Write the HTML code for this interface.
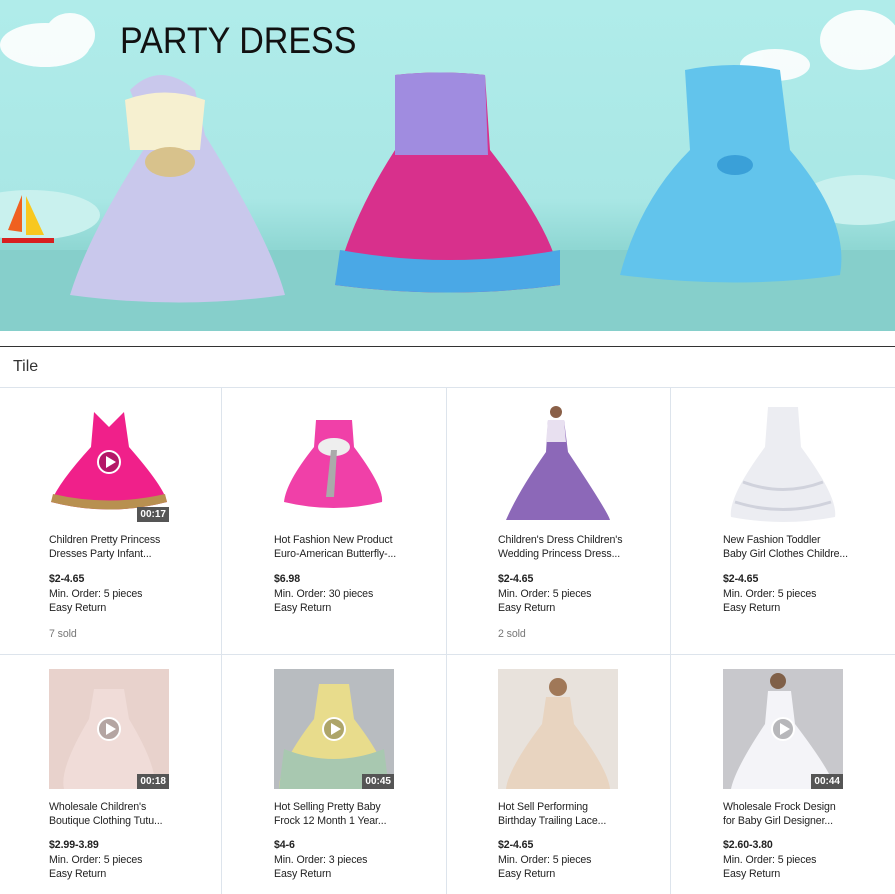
<!DOCTYPE html>
<html><head><meta charset="utf-8"><style>
*{margin:0;padding:0;box-sizing:border-box}
body{width:895px;height:891px;overflow:hidden;background:#fff;font-family:"Liberation Sans",Arial,sans-serif;position:relative}
.banner{position:absolute;left:0;top:0;width:895px;height:331px;background:linear-gradient(#b0ecea 0%,#a9e7e5 60%,#8fd7d3 75%,#85d0cc 100%);overflow:hidden}
.title{position:absolute;left:120px;top:20px;font-size:37px;letter-spacing:0;color:#111;font-family:"Liberation Sans",sans-serif;transform:scaleX(0.92);transform-origin:left top;white-space:nowrap}
.hr{position:absolute;left:0;top:346px;width:895px;height:1px;background:#333}
.tile{position:absolute;left:13px;top:358px;font-size:16px;color:#333}
.grid{position:absolute;left:0;top:387px;width:895px;border-top:1px solid #dde4ec}
.cell{position:absolute;border-right:1px solid #dde4ec;border-bottom:1px solid #dde4ec}
.img{position:absolute;left:49px;width:120px;height:120px}
.dur{position:absolute;right:0;bottom:0;background:#555;color:#fff;font-size:10px;font-weight:bold;padding:2px 3px}
.play{position:absolute;left:48px;top:48px;width:24px;height:24px;border:2px solid #fff;border-radius:50%;background:rgba(0,0,0,.25)}
.play:after{content:"";position:absolute;left:7px;top:4px;border-left:10px solid #fff;border-top:6px solid transparent;border-bottom:6px solid transparent}
.t,.p,.s{white-space:nowrap;font-size:10.6px;letter-spacing:-0.1px}
.t{position:absolute;left:49px;line-height:13.5px;color:#222}
.p{position:absolute;left:49px;line-height:14.5px;color:#222}
.s{position:absolute;left:49px;color:#777}
</style></head><body>
<div class="banner">
<svg width="895" height="331" style="position:absolute;left:0;top:0">
<g fill="#fff" opacity=".9"><ellipse cx="45" cy="45" rx="45" ry="22"/><ellipse cx="70" cy="35" rx="25" ry="22"/><ellipse cx="775" cy="65" rx="35" ry="16"/><ellipse cx="860" cy="40" rx="40" ry="30"/></g>
<g fill="#c9f1ee"><ellipse cx="30" cy="215" rx="70" ry="25"/><ellipse cx="860" cy="200" rx="60" ry="25"/></g>
<rect x="0" y="250" width="895" height="81" fill="#86cfcb"/>
<polygon points="8,230 22,195 22,232" fill="#f06020"/><polygon points="26,196 44,235 26,235" fill="#f8c820"/><rect x="2" y="238" width="52" height="5" fill="#d82020"/>
<path d="M130 90 Q160 60 195 90 L205 135 Q270 240 285 295 Q180 310 70 295 Q90 230 150 140Z" fill="#c9c8ec"/>
<path d="M125 100 Q165 85 205 100 L200 150 L130 150Z" fill="#f6f0d0"/>
<ellipse cx="170" cy="162" rx="25" ry="15" fill="#d8c28c"/>
<path d="M395 75 Q440 70 485 75 L490 150 Q560 240 560 285 Q450 300 335 285 Q350 220 395 150Z" fill="#d8308c"/>
<path d="M395 75 Q440 70 485 75 L488 155 L395 155Z" fill="#a08ce0"/>
<path d="M340 250 Q450 270 560 250 L560 285 Q450 300 335 285Z" fill="#4aa8e6"/>
<path d="M685 70 Q735 60 780 70 L790 150 Q850 220 840 275 Q740 290 620 275 Q640 200 690 150Z" fill="#62c4ec"/>
<ellipse cx="735" cy="165" rx="18" ry="10" fill="#3aa0d8"/>
</svg>
<div class="title">PARTY DRESS</div>
</div>
<div class="hr"></div>
<div class="tile">Tile</div>
<div class="grid">
<div class="cell" style="left:0;top:0;width:222px;height:267px">
<div class="img" style="top:14px"><svg width="120" height="120"><path d="M45 10 L60 25 L75 10 L80 45 Q115 85 118 100 Q60 115 2 100 Q10 80 42 45Z" fill="#f0208a"/><path d="M2 100 Q60 115 118 100 L116 92 Q60 105 4 92Z" fill="#b89050"/></svg><div class="play"></div><div class="dur">00:17</div></div>
<div class="t" style="top:146px">Children Pretty Princess<br>Dresses Party Infant...</div>
<div class="p" style="top:184px"><b>$2-4.65</b><br>Min. Order: 5 pieces<br>Easy Return</div>
<div class="s" style="top:240px">7 sold</div></div>
<div class="cell" style="left:221px;top:0;width:226px;height:267px">
<div class="img" style="left:53px;top:14px"><svg width="120" height="120"><path d="M42 18 L78 18 L80 45 Q110 85 108 100 Q60 112 10 100 Q12 80 40 45Z" fill="#f040a8"/><ellipse cx="60" cy="45" rx="16" ry="9" fill="#eee"/><path d="M57 48 L52 95 L60 95 L63 48Z" fill="#aaa"/></svg></div>
<div class="t" style="left:53px;top:146px">Hot Fashion New Product<br>Euro-American Butterfly-...</div>
<div class="p" style="left:53px;top:184px"><b>$6.98</b><br>Min. Order: 30 pieces<br>Easy Return</div></div>
<div class="cell" style="left:446px;top:0;width:225px;height:267px">
<div class="img" style="left:52px;top:14px"><svg width="120" height="120"><circle cx="58" cy="10" r="6" fill="#8a6048"/><path d="M50 18 L66 18 L70 50 Q110 110 112 118 L8 118 Q20 90 48 50Z" fill="#8c68b8"/><path d="M50 18 L66 18 L68 40 L48 40Z" fill="#e8e0f0"/></svg></div>
<div class="t" style="left:52px;top:146px">Children's Dress Children's<br>Wedding Princess Dress...</div>
<div class="p" style="left:52px;top:184px"><b>$2-4.65</b><br>Min. Order: 5 pieces<br>Easy Return</div>
<div class="s" style="left:52px;top:240px">2 sold</div></div>
<div class="cell" style="left:670px;top:0;width:226px;height:267px;border-right:none">
<div class="img" style="left:53px;top:14px"><svg width="120" height="120"><path d="M45 5 L75 5 L78 45 Q115 95 112 115 Q60 125 8 115 Q5 95 42 45Z" fill="#ecedf2"/><path d="M20 80 Q60 95 100 80 M12 100 Q60 115 108 100" stroke="#d0d2dc" stroke-width="3" fill="none"/></svg></div>
<div class="t" style="left:53px;top:146px">New Fashion Toddler<br>Baby Girl Clothes Childre...</div>
<div class="p" style="left:53px;top:184px"><b>$2-4.65</b><br>Min. Order: 5 pieces<br>Easy Return</div></div>
<div class="cell" style="left:0;top:266px;width:222px;height:240px;border-bottom:none">
<div class="img" style="top:15px;background:#e8d2cc"><svg width="120" height="120"><path d="M45 20 L75 20 L80 50 Q110 100 105 120 L15 120 Q10 100 40 50Z" fill="#f0dcd8"/></svg><div class="play"></div><div class="dur">00:18</div></div>
<div class="t" style="top:147px">Wholesale Children's<br>Boutique Clothing Tutu...</div>
<div class="p" style="top:184px"><b>$2.99-3.89</b><br>Min. Order: 5 pieces<br>Easy Return</div></div>
<div class="cell" style="left:221px;top:266px;width:226px;height:240px;border-bottom:none">
<div class="img" style="left:53px;top:15px;background:#b8bcc0"><svg width="120" height="120"><path d="M45 15 L75 15 L80 50 Q115 95 115 120 L5 120 Q5 95 40 50Z" fill="#e8dc8c"/><path d="M10 80 Q60 100 110 80 L115 120 L5 120Z" fill="#a8c8b0"/></svg><div class="play"></div><div class="dur">00:45</div></div>
<div class="t" style="left:53px;top:147px">Hot Selling Pretty Baby<br>Frock 12 Month 1 Year...</div>
<div class="p" style="left:53px;top:184px"><b>$4-6</b><br>Min. Order: 3 pieces<br>Easy Return</div></div>
<div class="cell" style="left:446px;top:266px;width:225px;height:240px;border-bottom:none">
<div class="img" style="left:52px;top:15px;background:#e8e2dc"><svg width="120" height="120"><circle cx="60" cy="18" r="9" fill="#a07858"/><path d="M48 28 L72 28 L76 55 Q110 100 112 120 L8 120 Q10 100 44 55Z" fill="#e8d4c0"/></svg></div>
<div class="t" style="left:52px;top:147px">Hot Sell Performing<br>Birthday Trailing Lace...</div>
<div class="p" style="left:52px;top:184px"><b>$2-4.65</b><br>Min. Order: 5 pieces<br>Easy Return</div></div>
<div class="cell" style="left:670px;top:266px;width:226px;height:240px;border:none">
<div class="img" style="left:53px;top:15px;background:#c8c8cc"><svg width="120" height="120"><circle cx="55" cy="12" r="8" fill="#806048"/><path d="M45 22 L68 22 L72 55 Q110 105 112 120 L8 120 Q12 100 42 55Z" fill="#f4f4f8"/></svg><div class="play"></div><div class="dur">00:44</div></div>
<div class="t" style="left:53px;top:147px">Wholesale Frock Design<br>for Baby Girl Designer...</div>
<div class="p" style="left:53px;top:184px"><b>$2.60-3.80</b><br>Min. Order: 5 pieces<br>Easy Return</div></div>
</div>
</body></html>
